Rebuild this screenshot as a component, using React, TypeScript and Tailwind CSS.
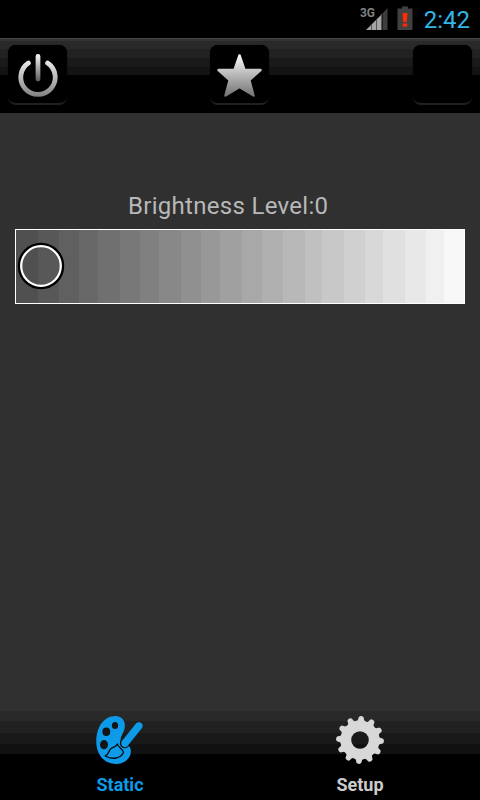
import type { ReactNode } from "react";

// Width and shade of every step on the brightness strip
const steps = [
  { w: 22, c: "#505050" },
  { w: 21, c: "#585858" },
  { w: 20, c: "#606060" },
  { w: 19, c: "#686868" },
  { w: 22, c: "#707070" },
  { w: 20, c: "#787878" },
  { w: 19, c: "#808080" },
  { w: 22, c: "#888888" },
  { w: 20, c: "#909090" },
  { w: 19, c: "#989898" },
  { w: 22, c: "#a0a0a0" },
  { w: 20, c: "#a8a8a8" },
  { w: 21, c: "#b0b0b0" },
  { w: 22, c: "#b8b8b8" },
  { w: 17, c: "#c0c0c0" },
  { w: 22, c: "#c8c8c8" },
  { w: 21, c: "#d0d0d0" },
  { w: 18, c: "#d8d8d8" },
  { w: 22, c: "#e0e0e0" },
  { w: 21, c: "#e8e8e8" },
  { w: 18, c: "#f0f0f0" },
  { w: 20, c: "#f8f8f8" },
];

const StatusBar = () => (
  <div className="flex h-[38px] items-start justify-end bg-black pr-[10px]">
    <svg width="28" height="32" viewBox="0 -6 28 32" className="mr-[9px]">
      <text x="0" y="11" fontFamily="Roboto" fontSize="13.500" fontWeight="700" fill="#808080" textLength="15" lengthAdjust="spacingAndGlyphs">3G</text>
      <path d="M6 24 L21.500 8.500 V24 Z" fill="#a5a5a5" />
      <path d="M22.5 7.5 L27.500 2 V24 H22.5 Z" fill="#3d3d3d" />
      <path d="M11.5 18 V24 M16.5 13 V24 M21.5 8 V24" stroke="#555" />
    </svg>
    <svg width="16" height="24" viewBox="0 0 16 24" className="mt-[6px] mr-[11px]">
      <path d="M5 0.500 H11 V2.500 H15.500 V24 H0.500 V2.500 H5 Z" fill="#404040" />
      <path d="M5.500 7 H10.500 L9.800 16 H6.200 Z M5.800 17.500 H10.200 V20.500 H5.800 Z" fill="#ff2a00" />
    </svg>
    <span className="font-[Roboto] text-[24px] leading-[40px] text-[#33b5e5]">2:42</span>
  </div>
);

const BarButton = ({ label, children }: { label: string; children?: ReactNode }) => (
  <button
    aria-label={label}
    className="flex h-[60px] w-[59px] items-center justify-center rounded-[8px] border-b-2 border-[#202020] bg-black shadow-[0_0_1px_#000]"
  >
    {children}
  </button>
);

const PowerIcon = () => (
  <svg width="40" height="44" viewBox="0 0 40 44" className="mt-[2px]">
    <defs>
      <linearGradient id="power" x1="0" y1="0" x2="0" y2="44" gradientUnits="userSpaceOnUse">
        <stop offset="0" stopColor="#fff" />
        <stop offset="0.600" stopColor="#b5b5b5" />
        <stop offset="1" stopColor="#808080" />
      </linearGradient>
      <linearGradient id="stem" x1="0" y1="0" x2="0" y2="28" gradientUnits="userSpaceOnUse">
        <stop offset="0" stopColor="#fff" />
        <stop offset="1" stopColor="#5c5c5c" />
      </linearGradient>
    </defs>
    <path d="M10.400 10 A17.200 17.200 0 1 0 29.600 10" fill="none" stroke="url(#power)" strokeWidth="4.800" strokeLinecap="round" />
    <path d="M20.010 3.500 L20 26" fill="none" stroke="url(#stem)" strokeWidth="4.800" strokeLinecap="round" />
  </svg>
);

const StarIcon = () => (
  <svg width="46" height="44" viewBox="0 0 46 44" className="mt-[2px]">
    <defs>
      <linearGradient id="star" x1="0" y1="0" x2="0" y2="44" gradientUnits="userSpaceOnUse">
        <stop offset="0" stopColor="#fff" />
        <stop offset="1" stopColor="#707070" />
      </linearGradient>
    </defs>
    <path
      d="M22.500 2.500 L27.500 17 H43.500 L32.300 27 L36.500 42.500 L22.500 34 L8.500 42.500 L12.700 27 L1.500 17 H17.500 Z"
      fill="url(#star)"
      stroke="url(#star)"
      strokeWidth="2.500"
      strokeLinejoin="round"
    />
  </svg>
);

const PaletteIcon = () => (
  <svg width="48" height="50" viewBox="0 0 48 50">
    <path
      d="M19.500 1 C26 1 29.500 6 28.800 12 C28 18 24.300 21 24.500 26 C24.500 31.500 28 33 31 31.500 C34.500 30.500 35.500 35 34.500 39.500 C32 45.500 27 49 20.500 49 C8 49 0.300 39.500 0.300 26.500 C0.300 12 8 1 19.500 1 Z"
      fill="#0d9ae8"
    />
    <g fill="#141414">
      <ellipse cx="19" cy="10.500" rx="3.100" ry="3.600" />
      <ellipse cx="10.300" cy="16.700" rx="3.900" ry="4.300" />
      <ellipse cx="8" cy="29.700" rx="4" ry="4.600" />
    </g>
    <path
      d="M9.200 41 C13 40 12 36.500 14.500 34 C17 31.500 20 32.500 21.500 29 C22 33 27 33.500 27.500 37.500 C25 43.500 16 45 9.200 41 Z"
      fill="#0d9ae8"
      stroke="#080808"
      strokeWidth="1.300"
      strokeLinejoin="round"
    />
    {/* Dark halo only where the handle crosses the palette */}
    <path d="M25 26 C23.500 31 27.500 34 31.500 31.500" fill="none" stroke="#080808" strokeWidth="1.500" />
    <path d="M25.500 26.500 L40 8.500 C43.500 5 48.500 9 46 13 L31.500 31 C28.500 34 24 31 25.500 26.500 Z" fill="#0d9ae8" />
  </svg>
);

const GearIcon = () => (
  <svg width="50" height="50" viewBox="-25 -25 50 50" fill="#d8d8d8">
    <circle r="14.200" fill="none" stroke="#d8d8d8" strokeWidth="10.800" />
    {Array.from({ length: 12 }, (_, i) => (
      <path key={i} d="M-4.800 -17.500 Q-2.800 -19.500 -2.400 -23 Q0 -25 2.400 -23 Q2.800 -19.500 4.800 -17.500 Z" transform={`rotate(${3 + i * 30})`} />
    ))}
  </svg>
);

const Tab = ({ label, active, children }: { label: string; active?: boolean; children: ReactNode }) => (
  <button className="flex flex-1 flex-col items-center pt-[4px]">
    <span className="flex h-[50px] items-center">{children}</span>
    <span className={`mt-[8px] font-[Roboto] text-[18px] leading-[24px] font-bold ${active ? "text-[#0d9ae8]" : "text-[#cccccc]"}`}>
      {label}
    </span>
  </button>
);

const App = () => (
  <div className="flex h-[800px] w-[480px] flex-col overflow-hidden bg-[#303030]">
    <StatusBar />

    <header className="flex h-[75px] items-start border-t border-[#484848] bg-[linear-gradient(#333_0_2px,#292929_2px_10px,#222_10px_19px,#1a1a1a_19px_28px,#131313_28px_36px,#000_36px)] pt-[6px] pl-[8px]">
      <BarButton label="Power">
        <PowerIcon />
      </BarButton>
      <div className="mr-[144px] ml-[143px]">
        <BarButton label="Favourites">
          <StarIcon />
        </BarButton>
      </div>
      <BarButton label="Colour" />
    </header>

    <main className="flex flex-1 flex-col px-[15px] pt-[77px]">
      <p className="ml-[113px] font-[Roboto] text-[24px] leading-[32px] tracking-[0.3px] text-[#b8b8b8]">Brightness Level:0</p>
      <div className="relative mt-[7px] flex h-[75px] w-[450px] border border-white">
        {steps.map((step) => (
          <span key={step.c} className="h-full" style={{ width: step.w, backgroundColor: step.c }} />
        ))}
        <svg width="48" height="48" viewBox="0 0 48 48" fill="none" className="absolute top-[12px] left-[1px]">
          <circle cx="24" cy="24" r="21.800" stroke="#000" strokeWidth="2.800" />
          <circle cx="24" cy="24" r="19.800" stroke="#fff" strokeWidth="2.200" />
        </svg>
      </div>
    </main>

    <nav className="flex h-[89px] bg-[linear-gradient(#292929_0_10px,#212121_10px_22px,#191919_22px_33px,#111_33px_43px,#000_43px)]">
      <Tab label="Static" active>
        <PaletteIcon />
      </Tab>
      <Tab label="Setup">
        <GearIcon />
      </Tab>
    </nav>
  </div>
);

export default App;
